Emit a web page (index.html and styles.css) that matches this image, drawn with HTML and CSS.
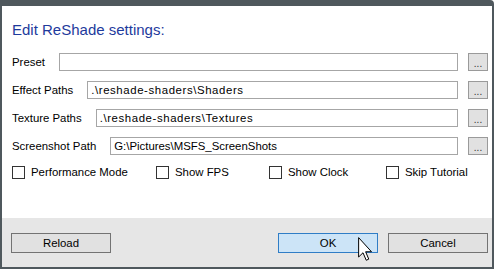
FILE: index.html
```html
<!DOCTYPE html>
<html lang="en">
<head>
  <meta charset="UTF-8" />
  <title>Edit ReShade settings</title>
  <link rel="stylesheet" href="styles.css">
</head>
<body>

  <div class="window">
    <div class="panel">
      <h1 class="title">Edit ReShade settings:</h1>

      <div class="row">
        <span class="label">Preset</span>
        <div class="field"></div>
        <button class="browse">...</button>
      </div>
      <div class="row">
        <span class="label">Effect Paths</span>
        <div class="field wide">.\reshade-shaders\Shaders</div>
        <button class="browse">...</button>
      </div>
      <div class="row">
        <span class="label">Texture Paths</span>
        <div class="field wide">.\reshade-shaders\Textures</div>
        <button class="browse">...</button>
      </div>
      <div class="row">
        <span class="label">Screenshot Path</span>
        <div class="field">G:\Pictures\MSFS_ScreenShots</div>
        <button class="browse">...</button>
      </div>

      <!-- options -->
      <div class="checks">
        <label class="check"><span class="box"></span><span class="text clip">Performance Mode</span></label>
        <label class="check"><span class="box"></span><span class="text">Show FPS</span></label>
        <label class="check"><span class="box"></span><span class="text">Show Clock</span></label>
        <label class="check"><span class="box"></span><span class="text">Skip Tutorial</span></label>
      </div>
    </div>

    <div class="footer">
      <button class="btn">Reload</button>
      <div class="spacer"></div>
      <button class="btn btn-ok">OK</button>
      <button class="btn">Cancel</button>

      <svg class="cursor" width="15" height="25" viewBox="0 0 12 20">
        <path d="M0.5 0.5 L0.5 16 L4 12.6 L6.6 18.6 L8.6 17.7 L6.1 11.8 L10.8 11.8 Z" fill="#fff" stroke="#000" stroke-width="0.8" stroke-linejoin="round"/>
      </svg>
    </div>
  </div>

</body>
</html>
```

FILE: styles.css
```css
body {
  margin: 0;
  background-color: white;
  font-family: "Liberation Sans", Arial, sans-serif;
  font-size: 11.4px;
  color: #000;
}

.window {
  width: 494px;
  height: 269px;
  box-sizing: border-box;
  border-top: 6px solid #4f585d;
  border-left: 2px solid #4f585d;
  border-right: 2px solid #4f585d;
  border-bottom: 2px solid #4f585d;
  border-top-right-radius: 4px;
  display: flex;
  flex-direction: column;
}

.panel {
  background-color: white;
  padding: 14px 4px 0 10px;
  height: 212px;
  box-sizing: border-box;
}

.title {
  margin: 0 0 13px 0;
  font-size: 15px;
  font-weight: normal;
  color: #1e3a9c;
  line-height: 20px;
}

.row {
  display: flex;
  align-items: center;
  height: 18px;
  margin-bottom: 10px;
}

.label {
  margin-right: 14px;
  white-space: nowrap;
}

.field {
  flex: 1;
  height: 18px;
  box-sizing: border-box;
  border: 1px solid #a6a6a6;
  padding: 0 3px;
  line-height: 16px;
  white-space: nowrap;
}

.wide {
  letter-spacing: 0.6px;
}

.browse {
  width: 20px;
  height: 18px;
  margin-left: 10px;
  padding: 0;
  border: 1px solid #9a9a9a;
  background-color: #e1e1e1;
  font-family: inherit;
  font-size: 10px;
  line-height: 20px;
  color: #333;
}

.checks {
  display: grid;
  grid-template-columns: 144px 113px 117px 1fr;
  margin-top: 5px;
}

.check {
  display: flex;
  align-items: center;
  height: 14px;
}

.box {
  width: 13px;
  height: 13px;
  box-sizing: border-box;
  border: 1px solid #333;
  background-color: white;
  margin-right: 6px;
  flex-shrink: 0;
}

.text {
  white-space: nowrap;
}

.clip {
  width: 98px;
  overflow: hidden;
}

.footer {
  flex: 1;
  background-color: #e6e6e6;
  display: flex;
  align-items: flex-start;
  padding: 15px 4px 0 9px;
  position: relative;
}

.spacer {
  flex: 1;
}

.btn {
  width: 100px;
  height: 20px;
  padding: 0;
  border: 1px solid #737373;
  background-color: #e1e1e1;
  font-family: inherit;
  font-size: 11.4px;
  color: #000;
}

.btn-ok {
  background-color: #cce4f7;
  border-color: #2f7dc6;
  margin-right: 10px;
}

.cursor {
  position: absolute;
  left: 356px;
  top: 19px;
}
```
